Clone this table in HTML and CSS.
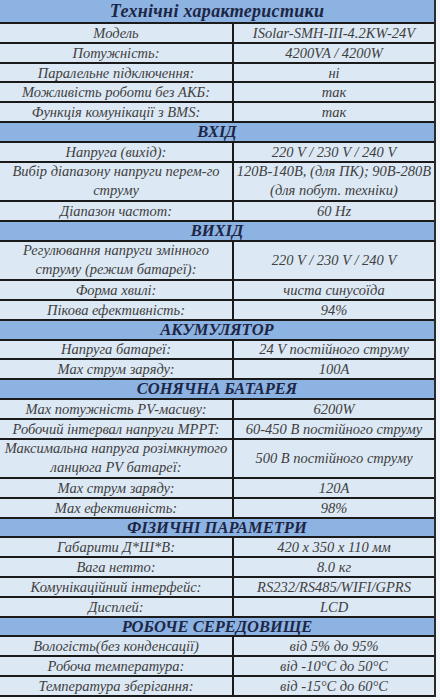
FILE: index.html
```html
<!DOCTYPE html>
<html lang="uk">
<head>
<meta charset="utf-8">
<title>Технічні характеристики</title>
<link rel="stylesheet" href="styles.css">
</head>
<body>
<div class="spec">
  <div class="title">Технічні характеристики</div>
  <div class="row"><div class="k">Модель</div><div class="v">ISolar-SMH-III-4.2KW-24V</div></div>
  <div class="row"><div class="k">Потужність:</div><div class="v">4200VA / 4200W</div></div>
  <div class="row"><div class="k">Паралельне підключення:</div><div class="v">ні</div></div>
  <div class="row"><div class="k">Можливість роботи без АКБ:</div><div class="v">так</div></div>
  <div class="row"><div class="k">Функція комунікації з BMS:</div><div class="v">так</div></div>
  <div class="section">ВХІД</div>
  <div class="row"><div class="k">Напруга (вихід):</div><div class="v">220 V / 230 V / 240 V</div></div>
  <div class="row tall"><div class="k">Вибір діапазону напруги перем-го<br>струму</div><div class="v">120В-140В, (для ПК); 90В-280В<br>(для побут. техніки)</div></div>
  <div class="row"><div class="k">Діапазон частот:</div><div class="v">60 Hz</div></div>
  <div class="section">ВИХІД</div>
  <div class="row tall"><div class="k">Регулювання напруги змінного<br>струму (режим батареї):</div><div class="v">220 V / 230 V / 240 V</div></div>
  <div class="row"><div class="k">Форма хвилі:</div><div class="v">чиста синусоїда</div></div>
  <div class="row"><div class="k">Пікова ефективність:</div><div class="v">94%</div></div>
  <div class="section">АКУМУЛЯТОР</div>
  <div class="row"><div class="k">Напруга батареї:</div><div class="v">24 V постійного струму</div></div>
  <div class="row"><div class="k">Max струм заряду:</div><div class="v">100A</div></div>
  <div class="section">СОНЯЧНА БАТАРЕЯ</div>
  <div class="row"><div class="k">Max потужність PV-масиву:</div><div class="v">6200W</div></div>
  <div class="row"><div class="k">Робочий інтервал напруги MPPT:</div><div class="v">60-450 В постійного струму</div></div>
  <div class="row tall"><div class="k">Максимальна напруга розімкнутого<br>ланцюга PV батареї:</div><div class="v">500 В постійного струму</div></div>
  <div class="row"><div class="k">Max струм заряду:</div><div class="v">120A</div></div>
  <div class="row"><div class="k">Max ефективність:</div><div class="v">98%</div></div>
  <div class="section">ФІЗИЧНІ ПАРАМЕТРИ</div>
  <div class="row"><div class="k">Габарити Д*Ш*В:</div><div class="v">420 x 350 x 110 мм</div></div>
  <div class="row"><div class="k">Вага нетто:</div><div class="v">8.0 кг</div></div>
  <div class="row"><div class="k">Комунікаційний інтерфейс:</div><div class="v">RS232/RS485/WIFI/GPRS</div></div>
  <div class="row"><div class="k">Дисплей:</div><div class="v">LCD</div></div>
  <div class="section">РОБОЧЕ СЕРЕДОВИЩЕ</div>
  <div class="row"><div class="k">Вологість(без конденсації)</div><div class="v">від 5% до 95%</div></div>
  <div class="row"><div class="k">Робоча температура:</div><div class="v">від -10°C до 50°C</div></div>
  <div class="row"><div class="k">Температура зберігання:</div><div class="v">від -15°C до 60°C</div></div>
</div>
</body>
</html>
```
FILE: styles.css
```css
html, body {
  margin: 0;
  padding: 0;
  background: #f3f7fb;
}
.spec {
  width: 436px;
  font-family: "Liberation Serif", "Times New Roman", serif;
  font-style: italic;
  border-right: 2px solid #2a2a2a;
  box-sizing: border-box;
}
.title {
  height: 24px;
  box-sizing: border-box;
  background: #8db3e2;
  border-bottom: 2px solid #1a1a1a;
  color: #1d2645;
  font-weight: bold;
  font-size: 18px;
  line-height: 22px;
  text-align: center;
  letter-spacing: 0.3px;
}
.section {
  height: 19.8px;
  box-sizing: border-box;
  background: #8db3e2;
  border-bottom: 2px solid #1a1a1a;
  color: #1d2645;
  font-weight: bold;
  font-size: 16.5px;
  line-height: 18px;
  text-align: center;
}
.row {
  display: grid;
  grid-template-columns: 234px 1fr;
  height: 19.8px;
  box-sizing: border-box;
  background: #dce8f4;
  border-bottom: 2px solid #1a1a1a;
  color: #404040;
  font-size: 14.5px;
  line-height: 18px;
}
.row.tall {
  height: 39.5px;
}
.k, .v {
  display: flex;
  align-items: center;
  justify-content: center;
  text-align: center;
  white-space: nowrap;
  overflow: hidden;
}
.k {
  border-right: 2px solid #1a1a1a;
}
.tall .k, .tall .v {
  line-height: 19px;
}
```
